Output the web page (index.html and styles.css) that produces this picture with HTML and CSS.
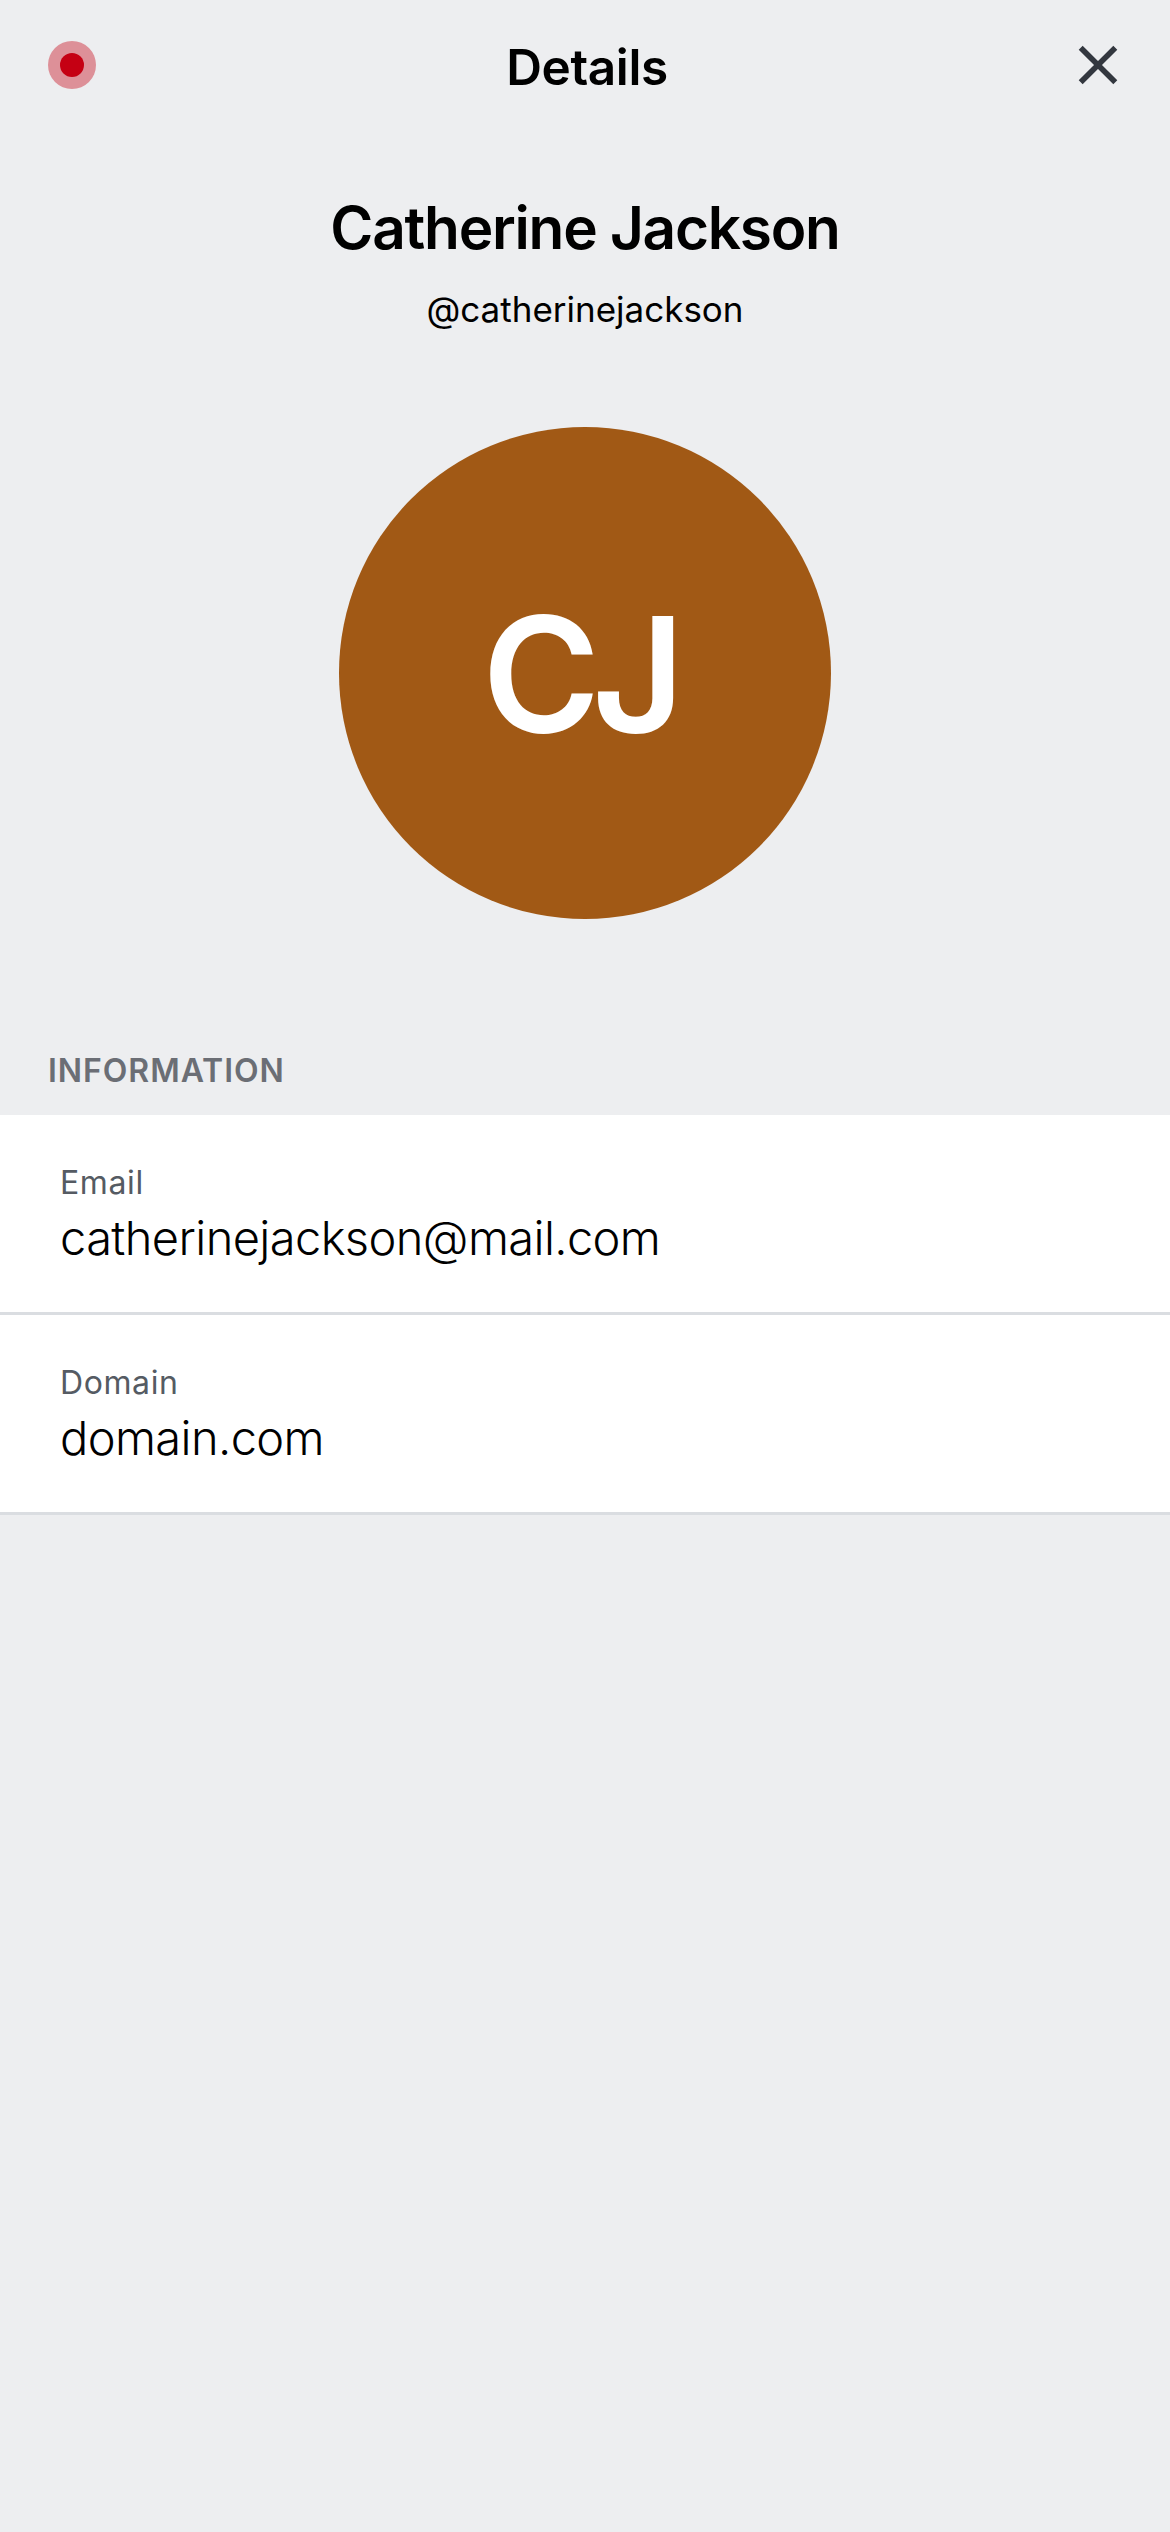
FILE: index.html
```html
<!DOCTYPE html>
<html lang="en">
<head>
<meta charset="utf-8">
<title>Details</title>
<link rel="stylesheet" href="styles.css">
</head>
<body>
<header class="bar">
  <svg class="record" viewBox="0 0 48 48"><circle cx="24" cy="24" r="24" fill="#dd9098"/><circle cx="24" cy="24" r="12" fill="#c50013"/></svg>
  <h1 class="title">Details</h1>
  <svg class="close" viewBox="0 0 40 40"><path d="M2.7 2.7L37.3 37.3M37.3 2.7L2.7 37.3" stroke="#33373f" stroke-width="5.6" fill="none"/></svg>
</header>
<main>
  <section class="profile">
    <h2 class="name">Catherine Jackson</h2>
    <p class="handle">@catherinejackson</p>
    <div class="avatar"><span class="initials">CJ</span></div>
  </section>
  <section>
    <h3 class="heading">INFORMATION</h3>
    <dl class="list">
      <div class="row"><dt class="label">Email</dt><dd class="value">catherinejackson@mail.com</dd></div>
      <div class="row"><dt class="label">Domain</dt><dd class="value">domain.com</dd></div>
    </dl>
  </section>
</main>
</body>
</html>
```
FILE: styles.css
```css
* { box-sizing: border-box; margin: 0; padding: 0; }
body { min-height: 2532px; background: #edeef0; color: #000; font-family: Inter, "Liberation Sans", sans-serif; }
.bar { height: 130px; padding: 0 52px 0 48px; display: grid; grid-template-columns: 48px 1fr 40px; align-items: center; }
.record { width: 48px; height: 48px; }
.close { width: 40px; height: 40px; justify-self: end; }
.title { text-align: center; font-size: 49.5px; font-weight: 600; line-height: 60px; letter-spacing: -0.4px; padding-top: 4px; }
.profile { display: flex; flex-direction: column; align-items: center; }
.name { margin-top: 60px; font-size: 58.5px; font-weight: 600; line-height: 76px; letter-spacing: -1.25px; }
.handle { margin-top: 19px; font-size: 35px; line-height: 48px; letter-spacing: 0; }
.avatar { margin-top: 94px; width: 492px; height: 492px; border-radius: 50%; background: #a15915; color: #fff; display: flex; align-items: center; justify-content: center; }
.initials { font-size: 160px; font-weight: 600; line-height: 200px; letter-spacing: -8px; padding-right: 11px; padding-top: 1px; }
.heading { margin: 131px 0 0 48px; height: 65px; line-height: 42px; font-size: 32px; font-weight: 600; color: #6b6e75; letter-spacing: 0.95px; }
.row { height: 200px; background: #fff; border-bottom: 3px solid #dadde1; padding: 47px 60px 0; }
.label { font-size: 32px; line-height: 42px; color: #555b63; letter-spacing: 0.6px; }
.value { font-size: 47px; font-weight: 300; line-height: 66px; letter-spacing: -0.6px; padding-top: 1px; }
```
